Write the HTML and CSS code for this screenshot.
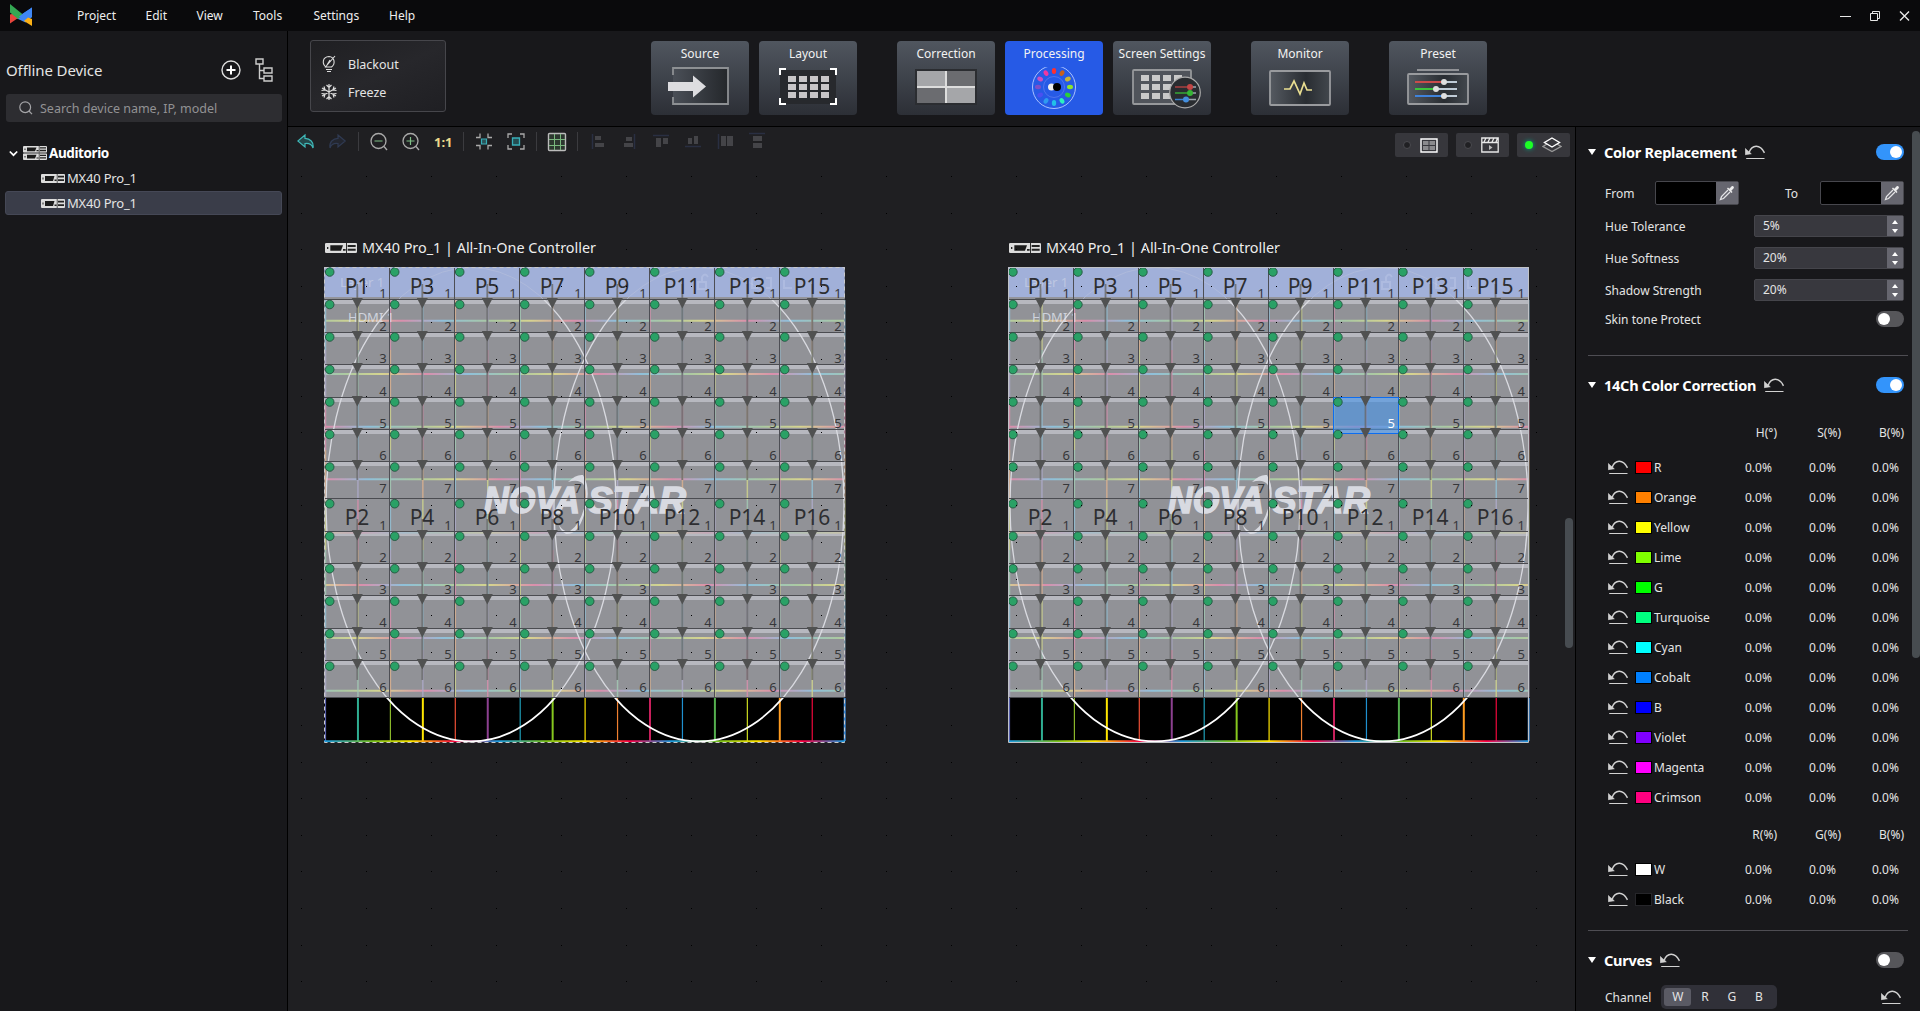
FILE: index.html
```html
<!DOCTYPE html>
<html lang="en">
<head>
<meta charset="utf-8">
<title>Screen Control</title>
<link rel="stylesheet" href="styles.css">
</head>
<body>
<svg class="defs" width="0" height="0">
  <defs>
    <symbol id="reset" viewBox="0 0 20 15"><path d="M4 7.500C7 -.6 15 -1.200 19.500 7.800" fill="none" stroke="#d2d2d2" stroke-width="1.500"/><path d="M.3 3.500V9.700L6.300 8.800L2.500 5.500Z" fill="#d2d2d2" stroke="#d2d2d2" stroke-width=".6"/><path d="M1.200 13.500H19.500" stroke="#d2d2d2"/></symbol>
    <symbol id="unit" viewBox="0 0 24 9" preserveAspectRatio="none"><rect width="24" height="9" rx="1" fill="#dcdcdc"/><path d="M4 2H13.500L12 7H4Z" fill="#1a1a1a"/><path d="M1.500 3.500h1v2h-1zM13.500 5.500h2v1.500h-2zM17 1.800h6v1.700h-6zM17 5.200h6v1.700h-6zM15.800 0h.7v9h-.7z" fill="#222"/></symbol>
    <symbol id="dropper" viewBox="0 0 16 16"><path d="M9 5L2.500 11.500L1.500 14.500L4.500 13.500L11 7" fill="none" stroke="#e4e4e6" stroke-width="1.300"/><path d="M8 3.500L12.500 8L13.500 7L12.300 5.700L14.700 3.300C15.500 2 14 .5 12.700 1.300L10.300 3.700L9 2.500Z" fill="#eee"/></symbol>
  </defs>
</svg>
<div class="app">
  <header class="menubar">
    <svg class="brand" width="22" height="22" viewBox="0 0 22 22"><path d="M22 3.500V13L15.500 18.500L6 14Z" fill="#3f87f5"/><path d="M0 10.500L8 8.500L11 12L0 19.500Z" fill="#e8453c"/><path d="M0 0L13.500 11L8 15L0 8.500Z" fill="#34a853"/><path d="M9 12.500L22 3.500V13L15.500 16Z" fill="#3f87f5"/><path d="M14 17L18 13.500L22 15V22Z" fill="#fbb016"/></svg>
    <nav class="menu"><span>Project</span><span>Edit</span><span>View</span><span>Tools</span><span>Settings</span><span>Help</span></nav>
    <svg class="winctl" width="72" height="12" viewBox="0 0 72 12" fill="none" stroke="#e8e8e8"><path d="M1 6.500H12"/><path d="M31.500 3.500h7v7h-7zM33.500 3V1.500h7v7H39"/><path d="M61 1.500L70 10.500M70 1.500L61 10.500" stroke-width="1.400"/></svg>
  </header>
  <aside class="sidebar">
    <div class="side-head"><h2>Offline Device</h2>
      <svg width="20" height="20" viewBox="0 0 20 20" fill="none" stroke="#ddd"><circle cx="10" cy="10" r="9" stroke-width="1.400"/><path d="M10 5.500V14.500M5.500 10H14.500" stroke="#fff" stroke-width="2"/></svg>
      <svg class="tree-ico" width="18" height="24" viewBox="0 0 18 24" fill="none" stroke="#ccc" stroke-width="1.400"><path d="M1 1h7v5H1zM9 10h8v5H9zM9 18h8v5H9zM4.500 6V20.500H9M4.500 12.500H9"/></svg>
    </div>
    <div class="search"><svg width="14" height="14" viewBox="0 0 14 14" fill="none" stroke="#a5a5a8" stroke-width="1.200"><circle cx="6.200" cy="6.200" r="5.400"/><path d="M10 10L13 13.200"/></svg><span>Search device name, IP, model</span></div>
    <div class="tree">
      <div class="node root"><svg width="9" height="7" viewBox="0 0 9 7" fill="none" stroke="#fff" stroke-width="1.700"><path d="M.8 1.500L4.500 5.200L8.200 1.500"/></svg><svg class="rack" width="24" height="14" viewBox="0 0 24 14"><use href="#unit" width="24" height="6.700"/><use href="#unit" y="7.300" width="24" height="6.700"/></svg><b>Auditorio</b></div>
      <div class="node"><svg width="24" height="9"><use href="#unit" width="24" height="9"/></svg><span>MX40 Pro_1</span></div>
      <div class="node selected"><svg width="24" height="9"><use href="#unit" width="24" height="9"/></svg><span>MX40 Pro_1</span></div>
    </div>
  </aside>
  <section class="ribbon">
    <div class="quick">
      <div><svg width="16" height="18" viewBox="0 0 16 18" fill="none" stroke="#ddd" stroke-width="1.100"><path d="M5 12C1 9 1 2 8 1.500C14 2 14.500 9 10.500 12ZM5 14.500H11M6 16.500H10M4 12.500L14 1M6 10L9 5"/></svg><span>Blackout</span></div>
      <div><svg width="16" height="16" viewBox="0 0 16 16" fill="none" stroke="#ddd" stroke-width="1.200"><path d="M8 0V16M1 4L15 12M15 4L1 12M5.500 1L8 3.500L10.500 1M5.500 15L8 12.500L10.500 15M.5 6.500L4 6L3 2.500M15.500 9.500L12 10L13 13.500M15.500 6.500L12 6L13 2.500M.5 9.500L4 10L3 13.500"/></svg><span>Freeze</span></div>
    </div>
    <div class="tabs">
      <div class="tab"><span>Source</span><svg width="98" height="48" viewBox="0 0 98 48"><defs><linearGradient id="sg"><stop stop-color="#4a4f57"/><stop offset="1" stop-color="#24272b"/></linearGradient></defs><rect x="22" y="1" width="55" height="36" rx="1" fill="url(#sg)"/><path d="M22 8V1H77V37H22V30" fill="none" stroke="#8d9093" stroke-width="1.800"/><path d="M17 15H42V8.500L55 19.500L42 30.500V24H17Z" fill="#dddde0"/></svg></div>
      <div class="tab"><span>Layout</span><svg width="98" height="48" viewBox="0 0 98 48"><path d="M21 3h56v34H21z" fill="#27292d"/><g fill="#c8c6c8"><path id="trio" d="M29 9h8v6h-8zM40 9h8v6h-8zM51 9h8v6h-8zM62 9h8v6h-8z"/><use href="#trio" y="8"/><use href="#trio" y="16"/></g><path d="M21 8V2H27M71 2H77V8M77 31V37H71M27 37H21V31" fill="none" stroke="#fff" stroke-width="2"/></svg></div>
      <div class="tab gap"><span>Correction</span><svg width="98" height="48" viewBox="0 0 98 48"><path d="M18 2h62v36H18z" fill="#2b2d31"/><path d="M20 4h28v15H20zM50 21h28v15H50z" fill="#a5a6a9"/><path d="M50 4h28v15H50zM20 21h28v15H20z" fill="#6b6c70"/><path d="M49 4V36M20 20H78" stroke="#ddd" stroke-width="2"/></svg></div>
      <div class="tab active"><span>Processing</span><svg id="wheel" width="98" height="48" viewBox="0 0 98 48"></svg></div>
      <div class="tab"><span>Screen Settings</span><svg width="98" height="48" viewBox="0 0 98 48"><rect x="20" y="3" width="58" height="34" rx="1" fill="#50545b" stroke="#96989b" stroke-width="1.800"/><g fill="#c9c9c9"><path id="row4" d="M28 8h8v6h-8zM39 8h8v6h-8zM50 8h8v6h-8zM61 8h8v6h-8z"/><use href="#row4" y="9"/><use href="#row4" y="18"/></g><circle cx="72" cy="25.500" r="15.300" fill="#292c30" stroke="#aaa" stroke-width="1.200"/><g stroke-width="1.500"><path d="M62 20H76" stroke="#a94040"/><path d="M62 26H76" stroke="#36a836"/><path d="M62 32.500H72" stroke="#3e82cf"/><path d="M76 20H83M76 26H83M72 32.500H83" stroke="#9ba4ad"/></g><circle cx="77" cy="20" r="3" fill="#c24545"/><circle cx="77" cy="26" r="3" fill="#36b536"/><circle cx="73" cy="32.500" r="3" fill="#438ede"/></svg></div>
      <div class="tab gap"><span>Monitor</span><svg width="98" height="48" viewBox="0 0 98 48"><defs><linearGradient id="mg"><stop stop-color="#555a61"/><stop offset=".6" stop-color="#292d32"/><stop offset="1" stop-color="#42474d"/></linearGradient></defs><rect x="19" y="4" width="60" height="34" rx="1" fill="url(#mg)" stroke="#999b9e" stroke-width="1.800"/><path d="M33 22H39L43 14L49 27L53 16L56 23H61" fill="none" stroke="#eadf91" stroke-width="1.700"/></svg></div>
      <div class="tab gap"><span>Preset</span><svg width="98" height="48" viewBox="0 0 98 48"><path d="M28 3H70" stroke="#909296" stroke-width="2"/><rect x="19" y="7" width="60" height="30" rx="1" fill="url(#mg)" stroke="#999b9e" stroke-width="1.800"/><g stroke-width="2"><path d="M26 15H54" stroke="#c94b4b"/><path d="M26 22H46" stroke="#3bc43b"/><path d="M26 29H54" stroke="#3f83dc"/><path d="M56 15H68M48 22H68M56 29H68" stroke="#bfcbd6"/></g><g fill="#dedede"><circle cx="55" cy="15" r="3"/><circle cx="47" cy="22" r="3"/><circle cx="55" cy="29" r="3"/></g></svg></div>
    </div>
  </section>
  <main class="stage">
    <div class="toolbar">
      <svg width="480" height="20" viewBox="0 0 480 20" fill="none">
        <path d="M8 3L.8 9L8 15V11.500C12 11 15 13 16 16C17 10 13 6.500 8 6.300Z" stroke="#3fb8b8" fill="#24474a" stroke-width="1.200"/>
        <path d="M41 3L48.200 9L41 15V11.500C37 11 34 13 33 16C32 10 36 6.500 41 6.300Z" stroke="#2f3a52" fill="#23262f" stroke-width="1.200"/>
        <path d="M61.500 0V19M166.500 0V19M239.500 0V19M280.500 0V19" stroke="#3b3b3f"/>
        <g stroke="#aaa" stroke-width="1.300"><circle cx="81.500" cy="9" r="7.500"/><path d="M87 14.500L90 18"/><circle cx="113.500" cy="9" r="7.500"/><path d="M119 14.500L122 18"/></g>
        <path d="M77.500 9H85.500M109.500 9H117.500M113.500 5V13" stroke="#7fbf86" stroke-width="1.200"/>
        <text x="137" y="15">1:1</text>
        <path d="M183 1.500V5.500H179M191 1.500V5.500H195M183 17.500V13.500H179M191 17.500V13.500H195" stroke="#aaa" stroke-width="1.300"/><path d="M184.500 7h5v5h-5z" stroke="#38aeb8" fill="#2b5358" stroke-width="1.200"/>
        <path d="M215 2H211V6M223 2H227V6M227 13V17H223M215 17H211V13" stroke="#aaa" stroke-width="1.300"/><path d="M215.500 6h7v7h-7z" stroke="#38aeb8" fill="#244d52" stroke-width="1.300"/>
        <rect x="251.500" y="1.500" width="17" height="17" rx="1" fill="#2c372f" stroke="#bbb" stroke-width="1.400"/><path d="M257.500 2V18M263.500 2V18M252 7.500H268M252 13.500H268" stroke="#79b77e"/>
        <g transform="translate(-2 0)"><path d="M297.500 2V17M339.500 2V17M358 3.500H374M390 14.500H406M423.500 2V17M454 1.500H470" stroke="#292f42" stroke-width="1.500"/>
        <path d="M300 4h6v4h-6zM300 11h9v4h-9zM331 5h6v4h-6zM329 11h9v4h-9zM361 6h5v9h-5zM368 6h5v6h-5zM393 6h4v6h-4zM399 4h4v8h-4zM426 4h5v10h-5zM432 4h6v10h-6zM458 4h9v5h-9zM458 11h9v5h-9z" fill="#444448"/></g>
      </svg>
      <div class="views">
        <div class="view"><i></i><svg width="18" height="15" viewBox="0 0 18 15"><path d="M1 1h16v13H1z" fill="none" stroke="#fff" stroke-width="1.400"/><path d="M3 3h5.500v4H3zM9.500 3H15v4H9.500zM3 8h5.500v4H3zM9.500 8H15v4H9.500z" fill="#8a8a8d"/></svg></div>
        <div class="view"><i></i><svg width="18" height="16" viewBox="0 0 18 16"><path d="M.8 1h16.400v14H.8zM1 5.500H17M3 5L5 1M7 5L9 1M11 5L13 1M15 5L16.500 1" fill="none" stroke="#e8e8e8" stroke-width="1.300"/><path d="M8 8L11.500 10.500L8 13Z" fill="#bbb"/></svg></div>
        <div class="view on"><i></i><svg width="20" height="16" viewBox="0 0 20 16" fill="none"><path d="M5 7L1 9.500L10 14.500L19 9.500L15 7" stroke="#999" stroke-width="1.300"/><path d="M10 1L17.500 5.500L10 10L2.500 5.500Z" stroke="#fff" stroke-width="1.400"/></svg></div>
      </div>
    </div>
    <svg id="canvas" class="canvas" width="1276" height="850" viewBox="288 161 1276 850"></svg>
    <div class="stage-scroll"></div>
  </main>
  <aside class="panel">
    <div class="panel-body" id="panel"></div>
    <div class="panel-scroll"></div>
  </aside>
</div>
<script src="app.js"></script>
</body>
</html>
```
FILE: styles.css
```css
* { box-sizing: border-box; }
body { margin: 0; background: #18181b; color: #e4e4e4; font: 12px "Noto Sans", "Open Sans", sans-serif; overflow: hidden; }
svg { display: block; flex: none; }
.defs { position: absolute; }
.app { display: grid; width: 1920px; height: 1011px; grid-template: 31px 96px 884px / 288px 1288px 344px; }
.menubar { grid-column: 1 / 4; display: flex; align-items: center; background: #0a0a0c; padding: 0 9px 0 10px; }
.brand { margin-top: -1px; }
.menu { display: grid; grid-template-columns: 68.5px 51px 56.5px 60.5px 75.5px 60px; margin-left: 45px; color: #eee; }
.winctl { margin-left: auto; }
.sidebar { grid-row: 2 / 4; border-right: 1px solid #000; }
.side-head { display: flex; align-items: center; height: 40px; margin-top: 19px; padding: 0 14px 0 7px; }
.side-head h2 { margin: 0 0 0 -1px; flex: 1; font-size: 15px; font-weight: 400; letter-spacing: -.1px; }
.tree-ico { margin-left: 14px; }
.search { display: flex; align-items: center; gap: 7px; margin: 4px 5px 0 6px; height: 28px; padding-left: 13px; border-radius: 3px; background: #2d2d31; color: #929294; font-size: 12.5px; }
.tree { margin: 19px 5px 0; }
.node { display: flex; align-items: center; height: 24px; padding-left: 35px; gap: 2px; margin-bottom: 1px; font-size: 13px; letter-spacing: -.2px; border-radius: 3px; border: 1px solid transparent; }
.node.root { height: 24px; padding-left: 3px; font-size: 13.5px; color: #fff; letter-spacing: -.4px; }
.root .rack { margin-left: 3px; }
.node.selected { background: #3a3d49; border-color: #454856; }
.ribbon { grid-column: 2 / 4; display: flex; align-items: flex-start; border-bottom: 1px solid #000; padding: 9px 0 0 22px; }
.quick { width: 136px; height: 72px; border: 1px solid #46464b; border-radius: 3px; background: linear-gradient(155deg, #1f1f22, #27272b 50%, #1f1f23); padding: 9px 0 0 10px; font-size: 12.5px; }
.quick div { display: flex; align-items: center; gap: 11px; height: 28px; }
.tabs { display: flex; gap: 10px; margin: 1px 0 0 205px; }
.tab { width: 98px; height: 74px; border-radius: 4px; background: linear-gradient(#50565f, #2c2f36); color: #f2f2f2; text-align: center; }
.tab > span { display: block; height: 26px; line-height: 25px; font-size: 12px; white-space: nowrap; }
.tab.gap { margin-left: 30px; }
.tab.active { background: #265ae6; }
.stage { display: grid; grid-template: 34px 1fr / 1276px 1fr; background: #1f1f22; border-right: 1px solid #000; overflow: hidden; }
.toolbar { grid-column: 1 / 3; display: flex; padding: 5px 5px 0 9px; justify-content: space-between; }
.toolbar text { font: bold 13px "Noto Sans", sans-serif; fill: #ecd98b; }
.views { display: flex; gap: 8px; margin-top: 1px; }
.view { display: flex; align-items: center; gap: 9px; width: 53px; height: 24px; padding-left: 8px; border-radius: 2px; background: #37373c; }
.view i { width: 8px; height: 8px; border-radius: 50%; background: #202023; border: 1px solid #4b4b50; }
.view.on i { background: #1dff25; border: 0; box-shadow: 0 0 5px #0a8; }
.canvas text { font-family: "Noto Sans", sans-serif; }
.canvas .title { font-size: 15px; fill: #eee; }
.canvas .port { font-size: 21px; fill: #2d2e31; text-anchor: middle; }
.canvas .num { font-size: 13px; fill: #36373a; text-anchor: end; }
.canvas .num.lit { fill: #fff; }
.canvas .ghost { font-size: 13px; fill: #dfe3ee; }
.canvas .logo { font: italic bold 37px "Liberation Sans", sans-serif; fill: #d8dae1; stroke: #d8dae1; stroke-width: 1.6; }
.stage-scroll { width: 8px; height: 130px; margin: 357px 0 0 1px; border-radius: 4px; background: #474c51; }
.panel { display: flex; justify-content: space-between; overflow: hidden; }
.panel-body { width: 320px; margin-left: 12px; }
.panel-scroll { width: 8px; height: 527px; margin-top: 4px; border-radius: 4px; background: #474c50; }
.sec { display: flex; align-items: center; height: 32px; padding-right: 4px; }
.sec h3 { margin: 0 8px; font-size: 14.5px; letter-spacing: -.25px; color: #fff; }
.sec::before { content: ""; border: 4px solid transparent; border-top: 6px solid #fff; border-bottom: 0; }
.toggle { width: 28px; height: 16px; margin-left: auto; border-radius: 8px; background: #56565a; padding: 2px; }
.toggle::before { content: ""; display: block; width: 12px; height: 12px; border-radius: 50%; background: #fff; }
.toggle.on { background: #3394fb; }
.toggle.on::before { margin-left: 12px; }
.pair, .field, .channel { display: flex; align-items: center; padding: 0 4px 0 17px; }
.pair { height: 24px; margin-top: 14px; }
.pair span:first-child { width: 50px; }
.pair span:nth-child(3) { margin-left: 46px; width: 35px; }
.picker { display: flex; justify-content: flex-end; width: 84px; height: 24px; border: 1px solid #47474d; border-radius: 2px; background: #000; }
.picker svg { width: 22px; height: 22px; padding: 3px; background: #66666f; }
.field { height: 22px; margin-top: 10px; }
.spin { display: flex; width: 150px; height: 22px; margin-left: auto; background: #38383e; border: 1px solid #45454b; border-radius: 2px; padding-left: 8px; line-height: 20px; justify-content: space-between; }
.spin i { width: 16px; background: #66666f; display: flex; flex-direction: column; align-items: center; justify-content: center; gap: 5px; }
.spin i::before, .spin i::after { content: ""; border: 3px solid transparent; border-bottom: 4px solid #fff; border-top: 0; }
.spin i::after { border-bottom: 0; border-top: 4px solid #fff; }
.rule { height: 1px; background: #4e4d53; }
.heads { display: grid; grid-template-columns: 189px 64px 63px; text-align: right; height: 20px; line-height: 20px; }
.ch { display: grid; grid-template-columns: 27px 19px 91px 64px 63px 40px; align-items: center; height: 30px; padding-left: 20px; }
.swatch { width: 17px; height: 13px; border: 1px solid #000; }
.swatch.dark { border-color: #26262a; }
.channel { height: 24px; }
.channel .seg { display: flex; align-items: center; width: 116px; height: 24px; margin-left: 10px; padding: 3px 5px 3px 3px; border-radius: 5px; background: #303038; }
.seg b { flex: 1; font-weight: 400; text-align: center; height: 18px; line-height: 18px; border-radius: 3px; }
.seg b:first-child { background: #5a5a64; }
.channel svg { margin-left: auto; margin-right: 3px; }
```
FILE: app.js
```js
const reset = '<svg width="20" height="15"><use href="#reset" width="20" height="15"/></svg>';

// Colour wheel on the Processing tab
const wheelColors = ['#ff3030', '#c8601c', '#c7b33a', '#8ce62c', '#2bcf3a', '#2df0c0', '#22c0e8', '#2f9af0', '#4a50f0', '#7d4fc8', '#c94fc0', '#ef38a0'];
let wheel = '<circle cx="49" cy="20" r="21.500" fill="none" stroke="#a9c1ff" stroke-width="1"/><circle cx="49" cy="20" r="10.500" fill="none" stroke="#4f74ee"/>';
wheelColors.forEach((c, i) => { wheel += `<ellipse cx="49" cy="4" rx="2.200" ry="3" fill="${c}" transform="rotate(${i * 30} 49 20)"/>`; });
document.getElementById('wheel').innerHTML = wheel + '<circle cx="46.500" cy="20" r="3.500" fill="#eee"/><circle cx="52" cy="20" r="4" fill="#000"/>';

// Canvas with the two LED walls
const rows = [267, 299.5, 332.5, 364.5, 397.5, 429.5, 461.5, 498.5, 531.5, 563.5, 595.5, 628.5, 660.5, 697.5];
const bottoms = ['#5a62b0', '#2fae92', '#8ab72a', '#ffe600', '#ef5036', '#8d4090', '#1f9fb8', '#86c81e', '#ffe600', '#f08030', '#c8205c', '#1f90d0', '#55b050', '#cddc20', '#ff9c20', '#f0083c', '#3d8bd8'];
const pale = ['#93bfd4', '#a3c9b4', '#cdd28e', '#d9b08f', '#d690ad', '#adaac8'];
let defs = `<defs><linearGradient id="rb" gradientUnits="userSpaceOnUse" x1="325" x2="498" y1="0" y2="0" spreadMethod="repeat"><stop stop-color="#1e9be0"/><stop offset=".28" stop-color="#7cc41c"/><stop offset=".5" stop-color="#ffe600"/><stop offset=".76" stop-color="#ff0046"/><stop offset="1" stop-color="#1e9be0"/></linearGradient>`;
[-130, -55, -30, -95].forEach((o, i) => {
  defs += `<linearGradient id="pale${i}" gradientUnits="userSpaceOnUse" x1="${325 + o}" x2="${498 + o}" y1="0" y2="0" spreadMethod="repeat"><stop stop-color="#8fc0da"/><stop offset=".28" stop-color="#abc9a2"/><stop offset=".5" stop-color="#d6d48f"/><stop offset=".76" stop-color="#da8fac"/><stop offset="1" stop-color="#8fc0da"/></linearGradient>`;
});
defs += '</defs>';

function wall(dx, selected) {
  let s = `<g transform="translate(${dx} 0)"><svg x="325" y="243" width="32" height="10"><use href="#unit" width="32" height="10"/></svg>`;
  s += '<text class="title" x="362" y="253" textLength="234" lengthAdjust="spacingAndGlyphs">MX40 Pro_1 | All-In-One Controller</text>';
  s += '<path d="M324 267h521v430H324z" fill="#919297"/><path d="M324 697h521v45.500H324z" fill="#000"/><path d="M324 267h521v30H324z" fill="#a1b0d9"/>';
  for (let r = 1; r < 13; r++) if (r !== 7) s += `<path d="M324 ${rows[r] + 2.500}H845" stroke="#b7b8bf" stroke-width="4"/>`;
  s += '<path d="M324 297.800H845" stroke="#96989f"/>';
  [320.7, 374, 426.7, 479.3, 532.7, 585, 638, 690.7].forEach((y, i) => {
    s += `<path d="M325 ${y - 1}H845V${y + 1}H325z" fill="url(#pale${[1, 2, 0, 0, 3, 3, 1, 2][i]})" ${i === 4 ? 'opacity=".4"' : ''}/>`;
  });
  for (let c = 0; c < 17; c++) {
    const x = 325.5 + c * 32.45;
    for (let k = 0; k < 8; k++) {
      const y = 300 + k * 50;
      s += `<path d="M${x} ${y}V${Math.min(y + 50, 697)}" stroke="${pale[(c * 2 + k * 5 + (c >> 2)) % 6]}" stroke-width="1.500" opacity=".85"/>`;
    }
    s += `<path d="M${x} 698V741" stroke="${bottoms[c]}" stroke-width="${(c % 2 !== 0) !== (c > 8) ? 2 : 1.200}"/>`;
  }
  s += '<path d="M324 740.300H845V742.300H324z" fill="url(#rb)"/>';
  for (const cx of [471, 699]) {
    const ring = `<ellipse cx="${cx}" cy="504.500" rx="145" ry="237" fill="none"`;
    s += `${ring} stroke="#d9dae0" stroke-width="1.300" clip-path="url(#mid)"/>`;
    s += `${ring} stroke="#b4bedb" opacity=".7" clip-path="url(#top)"/>`;
    s += `${ring} stroke="#fff" stroke-width="1.800" clip-path="url(#low)"/>`;
  }
  s += '<text class="logo" x="484" y="513" textLength="96" lengthAdjust="spacingAndGlyphs">NOVA</text><text class="logo" x="588" y="513" textLength="98" lengthAdjust="spacingAndGlyphs">STAR</text>';
  s += '<path d="M568 482Q576 474 583 475Q592 490 584 515Q578 535 566 534Q560 531 559 525Q564 533 570 531Q580 525 585 505Q590 475 568 482Z" fill="#d8dae1"/>';
  s += '<text class="ghost" x="340" y="287" opacity=".45">Layer 1</text><text class="ghost" x="348" y="322" opacity=".8">HDMI 1</text>';
  s += '<g opacity=".18" fill="none" stroke="#e8edff" stroke-width="2"><path d="M698 282h8v7h-8zM702 282v-5q3-5 6 0M752 278h6M752 278v10h6M766 278h5v10h-5M784 280v8h8"/></g>';
  for (let c = 0; c <= 8; c++) s += `<path d="M${324.5 + c * 65} 268V697" stroke="#4d4e54" ${c % 8 ? '' : 'opacity=".3"'}/>`;
  for (let r = 1; r < 14; r++) s += `<path d="M324 ${rows[r]}H845" stroke="#4b4c51"/>`;
  if (selected) s += '<path d="M649.500 397.500h65v36h-65z" fill="#4b96e8" fill-opacity=".62" stroke="#0d6df0"/>';
  for (let c = 0; c < 8; c++) {
    const x = 357.3 + c * 65 - (selected ? .8 : 0);
    s += `<path d="M${x} 284V480M${x} 519V680" stroke="#686969" stroke-width="1.800" opacity=".8"/>`;
    s += `<text class="port" x="${x - .3}" y="293.500">P${c * 2 + 1}</text><text class="port" x="${x - .3}" y="524.500">P${c * 2 + 2}</text>`;
    for (let r = 0; r < 13; r++) {
      const lit = selected && c === 5 && r === 4;
      s += `<circle cx="${x - 27.600}" cy="${(r < 7 ? 272 + r * 32.500 : 503.700 + (r - 7) * 32.500)}" r="4.300" fill="#2aa166" stroke="#22553f" stroke-width=".9"/>`;
      if (r !== 0 && r !== 7) s += `<path d="M${x - 5.500} ${rows[r] - 1.500}h11l-5.500 10.500z" fill="#505151"/>`;
      s += `<text class="num${lit ? ' lit' : ''}" x="${x + 29.500}" y="${rows[r + 1] - (r === 6 || r === 12 ? 5.500 : 1.500)}">${r < 7 ? r + 1 : r - 6}</text>`;
    }
  }
  s += selected ? '<path d="M324.500 267.500h520v475h-520z" fill="none" stroke="#c0c2c7"/>' : '<path d="M324.500 267.500h520v475h-520z" fill="none" stroke="#c8c8ca" stroke-dasharray="4 3"/>';
  return s + '</g>';
}
defs += '<clipPath id="top"><path d="M320 260h530v39H320z"/></clipPath><clipPath id="mid"><path d="M320 299h530v398H320z"/></clipPath><clipPath id="low"><path d="M320 698h530v45H320z"/></clipPath>';
let dots = '';
for (let x = 301; x < 1564; x += 65) for (let k = 0; k < 24; k++) dots += `M${x} ${Math.round(176 + k * 36.600)}h1v1h-1z`;
document.getElementById('canvas').innerHTML = defs + wall(0, false) + wall(684, true) + `<path d="${dots}" fill="#000"/>`;

// Properties panel
const section = (name, on) => `<div class="sec"><h3>${name}</h3>${reset}<div class="toggle ${on ? 'on' : ''}"></div></div>`;
const field = (name, v) => `<div class="field"><span>${name}</span><div class="spin">${v}<i></i></div></div>`;
const gap = h => `<div style="height:${h}px"></div>`;
const heads = a => `<div class="heads">${a.map(t => `<span>${t}</span>`).join('')}</div>`;
const channel = ([name, color]) => `<div class="ch">${reset}<div class="swatch ${name === 'Black' ? 'dark' : ''}" style="background:${color}"></div><span>${name}</span><span>0.0%</span><span>0.0%</span><span>0.0%</span></div>`;
const picker = '<div class="picker"><svg viewBox="0 0 16 16"><use href="#dropper"/></svg></div>';
const channels = [['R', '#f00'], ['Orange', '#ff8000'], ['Yellow', '#ff0'], ['Lime', '#80ff00'], ['G', '#0f0'], ['Turquoise', '#00ff80'], ['Cyan', '#0ff'], ['Cobalt', '#0080ff'], ['B', '#00f'], ['Violet', '#8000ff'], ['Magenta', '#f0f'], ['Crimson', '#ff0080']];
document.getElementById('panel').innerHTML =
  gap(9) + section('Color Replacement', true) +
  `<div class="pair" style="margin-top:13px"><span>From</span>${picker}<span>To</span>${picker}</div>` +
  field('Hue Tolerance', '5%') + field('Hue Softness', '20%') + field('Shadow Strength', '20%') +
  gap(7) + '<div class="field" style="margin:0"><span>Skin tone Protect</span><div class="toggle"></div></div>' +
  gap(25) + '<div class="rule"></div>' + gap(13) + section('14Ch Color Correction', true) +
  gap(22) + heads(['H(°)', 'S(%)', 'B(%)']) + gap(9) + channels.map(channel).join('') +
  gap(13) + heads(['R(%)', 'G(%)', 'B(%)']) + gap(9) + channel(['W', '#fff']) + channel(['Black', '#000']) +
  gap(16) + '<div class="rule"></div>' + gap(13) + section('Curves', false) + gap(9) +
  `<div class="channel"><span>Channel</span><div class="seg"><b>W</b><b>R</b><b>G</b><b>B</b></div>${reset}</div>`;
```
